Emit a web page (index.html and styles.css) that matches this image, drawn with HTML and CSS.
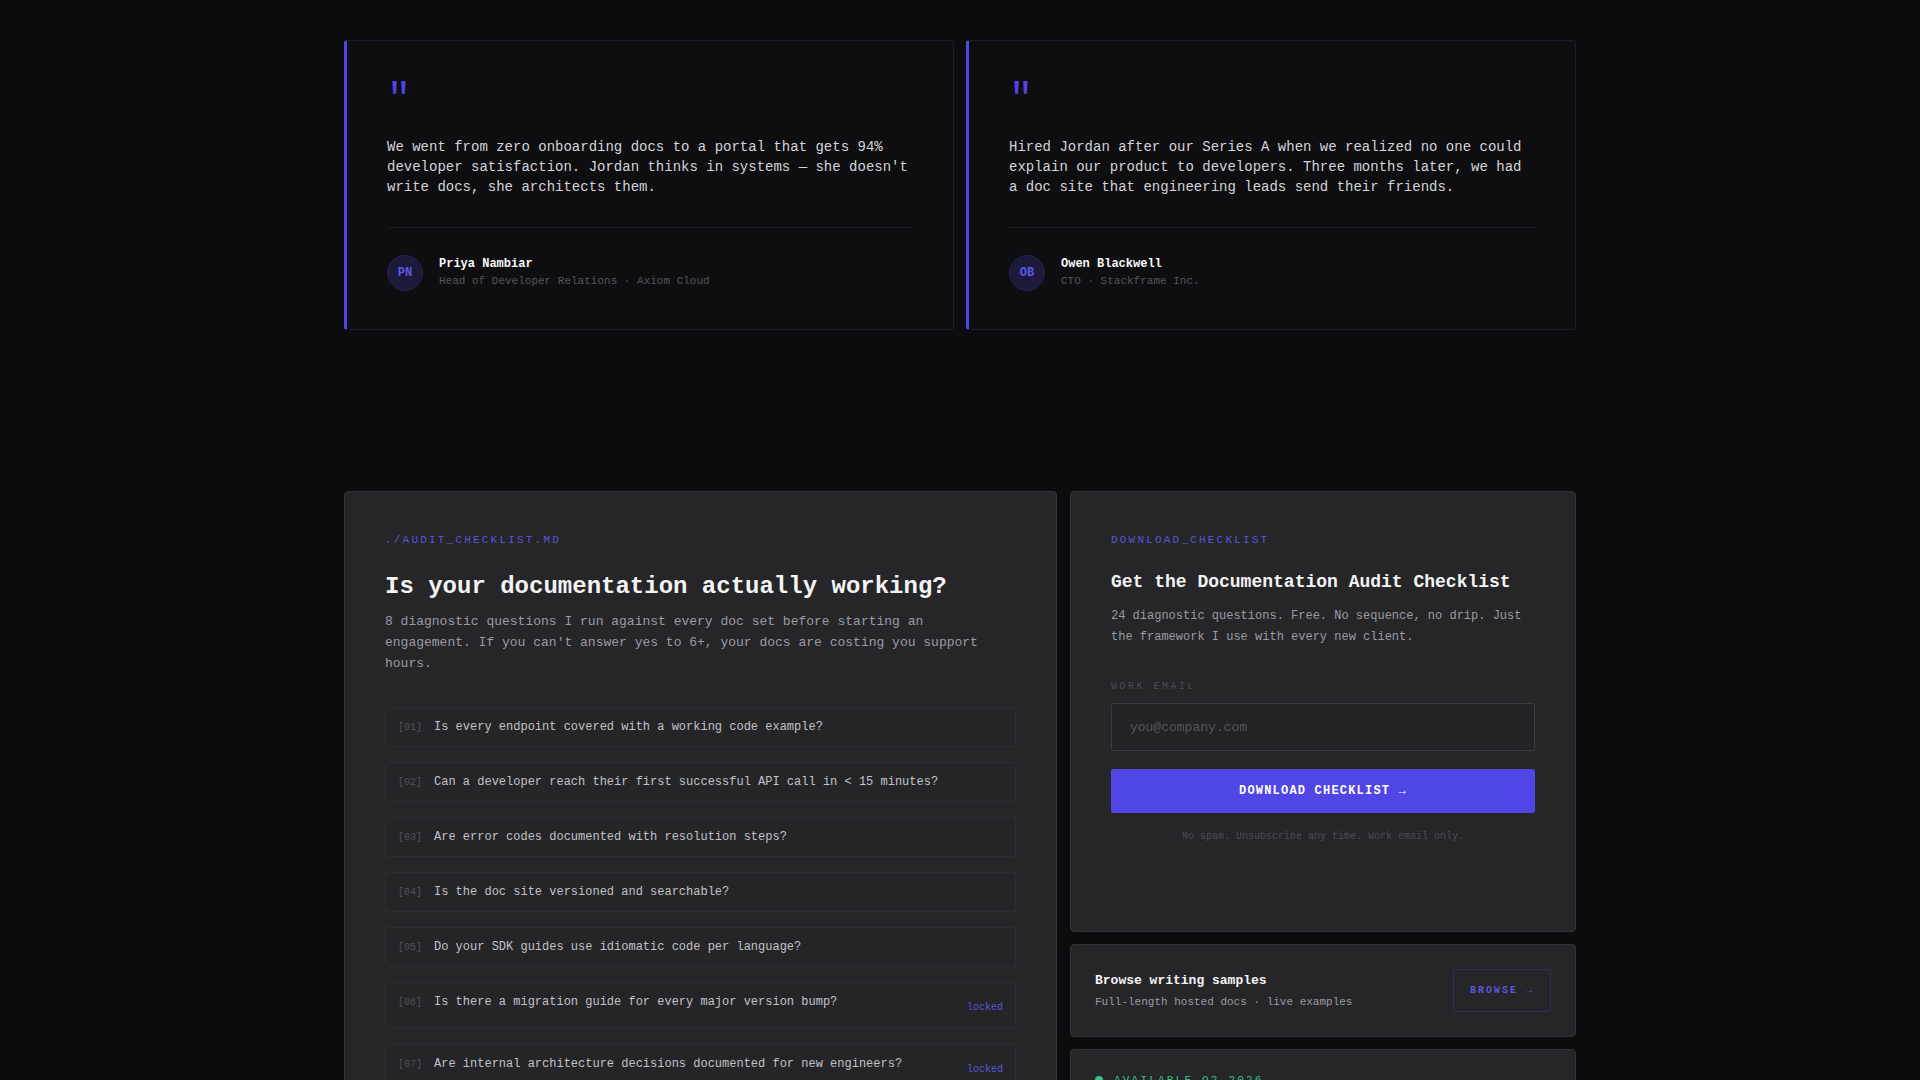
FILE: index.html
```html
<!DOCTYPE html>
<html lang="en">
<head>
<meta charset="utf-8">
<title>Testimonials &amp; Audit Checklist</title>
<link rel="stylesheet" href="styles.css">
</head>
<body>
<main class="page">
  <section class="testimonials">
    <article class="tcard">
      <div class="qmark">"</div>
      <p class="qtext">We went from zero onboarding docs to a portal that gets 94% developer satisfaction. Jordan thinks in systems — she doesn't write docs, she architects them.</p>
      <div class="tfoot">
        <div class="avatar">PN</div>
        <div class="who">
          <div class="name">Priya Nambiar</div>
          <div class="role">Head of Developer Relations · Axiom Cloud</div>
        </div>
      </div>
    </article>
    <article class="tcard">
      <div class="qmark">"</div>
      <p class="qtext">Hired Jordan after our Series A when we realized no one could explain our product to developers. Three months later, we had a doc site that engineering leads send their friends.</p>
      <div class="tfoot">
        <div class="avatar">OB</div>
        <div class="who">
          <div class="name">Owen Blackwell</div>
          <div class="role">CTO · Stackframe Inc.</div>
        </div>
      </div>
    </article>
  </section>

  <section class="audit">
    <div class="panel checklist">
      <div class="eyebrow">./AUDIT_CHECKLIST.MD</div>
      <h2 class="h-big">Is your documentation actually working?</h2>
      <p class="lead">8 diagnostic questions I run against every doc set before starting an engagement. If you can't answer yes to 6+, your docs are costing you support hours.</p>
      <ol class="items">
        <li class="item"><span class="num">[01]</span><span class="q">Is every endpoint covered with a working code example?</span></li>
        <li class="item"><span class="num">[02]</span><span class="q">Can a developer reach their first successful API call in &lt; 15 minutes?</span></li>
        <li class="item"><span class="num">[03]</span><span class="q">Are error codes documented with resolution steps?</span></li>
        <li class="item"><span class="num">[04]</span><span class="q">Is the doc site versioned and searchable?</span></li>
        <li class="item"><span class="num">[05]</span><span class="q">Do your SDK guides use idiomatic code per language?</span></li>
        <li class="item locked"><span class="num">[06]</span><span class="q">Is there a migration guide for every major version bump?</span><span class="lock">locked</span></li>
        <li class="item locked"><span class="num">[07]</span><span class="q">Are internal architecture decisions documented for new engineers?</span><span class="lock">locked</span></li>
        <li class="item locked"><span class="num">[08]</span><span class="q">Do you measure documentation with real usage analytics?</span><span class="lock">locked</span></li>
      </ol>
    </div>

    <div class="side">
      <div class="panel form-card">
        <div class="eyebrow">DOWNLOAD_CHECKLIST</div>
        <h3 class="h-mid">Get the Documentation Audit Checklist</h3>
        <p class="desc">24 diagnostic questions. Free. No sequence, no drip. Just the framework I use with every new client.</p>
        <label class="field-label" for="email">WORK EMAIL</label>
        <input class="field" id="email" type="email" placeholder="you@company.com">
        <button class="cta" type="button">DOWNLOAD CHECKLIST →</button>
        <p class="note">No spam. Unsubscribe any time. Work email only.</p>
      </div>

      <div class="panel browse-card">
        <div class="browse-text">
          <div class="browse-title">Browse writing samples</div>
          <div class="browse-sub">Full-length hosted docs · live examples</div>
        </div>
        <a class="browse-btn" href="#">BROWSE →</a>
      </div>

      <div class="panel avail-card">
        <div class="avail"><span class="dot"></span>AVAILABLE Q2 2026</div>
        <p class="avail-text">Currently booking documentation engagements for next quarter.</p>
      </div>
    </div>
  </section>
</main>
</body>
</html>
```

FILE: styles.css
```css
* { box-sizing: border-box; }

html, body {
  margin: 0;
  padding: 0;
  background: #0c0c0e;
}

body {
  font-family: "Liberation Mono", "DejaVu Sans Mono", monospace;
  color: #d4d4d8;
}

.page {
  width: 1232px;
  margin: 0 auto;
  padding-top: 40px;
}

/* Testimonials */
.testimonials {
  display: grid;
  grid-template-columns: 1fr 1fr;
  gap: 12px;
}

.tcard {
  background: #0e0e11;
  border: 1px solid #1c1b2d;
  border-left: 3px solid #4f46e5;
  border-radius: 3px;
  padding: 40px 40px 38px;
}

.qmark {
  font-size: 40px;
  line-height: 40px;
  height: 40px;
  color: #4f46e5;
  font-weight: 400;
}

.qtext {
  margin: 16px 0 30px;
  font-size: 14px;
  line-height: 20px;
  color: #d4d4d8;
}

.tfoot {
  border-top: 1px solid #1a1a1f;
  padding-top: 27px;
  display: flex;
  align-items: center;
  gap: 16px;
}

.avatar {
  width: 36px;
  height: 36px;
  border-radius: 50%;
  background: #1b1a3a;
  border: 1px solid #25234d;
  color: #5b57e6;
  font-size: 12px;
  font-weight: 700;
  display: flex;
  align-items: center;
  justify-content: center;
  flex: none;
}

.name {
  font-size: 12px;
  font-weight: 700;
  color: #fafafa;
  line-height: 17px;
}

.role {
  font-size: 11px;
  color: #55555c;
  line-height: 17px;
}

/* Audit section */
.audit {
  margin-top: 161px;
  display: grid;
  grid-template-columns: 713px 1fr;
  gap: 13px;
  align-items: start;
}

.panel {
  background: #262629;
  border: 1px solid #333337;
  border-radius: 4px;
}

.checklist {
  padding: 40px;
}

.eyebrow {
  font-size: 11px;
  line-height: 16px;
  letter-spacing: 0.2em;
  color: #5a55d8;
  margin-bottom: 23px;
}

.h-big {
  margin: 0 0 10px;
  font-size: 24px;
  line-height: 1.3;
  font-weight: 700;
  color: #f4f4f5;
}

.lead {
  margin: 0 0 32px;
  font-size: 13px;
  line-height: 1.6;
  color: #9b9ba2;
}

.items {
  list-style: none;
  margin: 0;
  padding: 0;
  display: flex;
  flex-direction: column;
  gap: 15px;
}

.item {
  display: flex;
  align-items: center;
  gap: 12px;
  padding: 10px 12px;
  border: 1px solid #2d2d31;
  background: #252528;
  border-radius: 2px;
  font-size: 12px;
  line-height: 18px;
}

.num {
  font-size: 10px;
  color: #505057;
  flex: none;
  position: relative;
  top: 1px;
}

.q {
  color: #c2c2c7;
  flex: 1;
}

.item.locked {
  align-items: flex-start;
}

.lock {
  font-size: 10px;
  line-height: 14px;
  padding: 3px 0;
  margin-top: 5px;
  color: #5a55d8;
  flex: none;
}

/* Side column */
.side {
  display: flex;
  flex-direction: column;
  gap: 12px;
}

.form-card {
  padding: 40px;
  min-height: 441px;
  display: flex;
  flex-direction: column;
}

.h-mid {
  margin: 0 0 12px;
  font-size: 18px;
  line-height: 1.3;
  font-weight: 700;
  color: #f4f4f5;
}

.desc {
  margin: 0 0 32px;
  font-size: 12px;
  line-height: 1.7;
  color: #9b9ba2;
}

.field-label {
  font-size: 10px;
  line-height: 15px;
  letter-spacing: 0.25em;
  color: #4a4a50;
  margin-bottom: 9px;
}

.field {
  height: 48px;
  width: 100%;
  background: #232326;
  border: 1px solid #3a3a3f;
  border-radius: 2px;
  padding: 0 18px;
  font-family: inherit;
  font-size: 13px;
  color: #d4d4d8;
  outline: none;
}

.field::placeholder {
  color: #55555c;
}

.cta {
  margin-top: 18px;
  height: 44px;
  width: 100%;
  border: 0;
  border-radius: 2px;
  background: #4f46e5;
  color: #ffffff;
  font-family: inherit;
  font-size: 12px;
  font-weight: 700;
  letter-spacing: 0.1em;
  cursor: pointer;
}

.note {
  margin: 16px 0 0;
  text-align: center;
  font-size: 10px;
  line-height: 15px;
  color: #4c4c52;
}

.browse-card {
  padding: 24px;
  display: flex;
  align-items: center;
  justify-content: space-between;
}

.browse-title {
  font-size: 13px;
  line-height: 18px;
  font-weight: 700;
  color: #f4f4f5;
}

.browse-sub {
  margin-top: 4px;
  font-size: 11px;
  line-height: 16px;
  color: #9b9ba2;
}

.browse-btn {
  display: block;
  padding: 13px 16px;
  border: 1px solid #302d5c;
  border-radius: 2px;
  font-size: 10px;
  line-height: 15px;
  font-weight: 700;
  letter-spacing: 0.2em;
  color: #5a55d8;
  text-decoration: none;
}

.avail-card {
  padding: 22px 24px 24px;
}

.avail {
  display: flex;
  align-items: center;
  gap: 11px;
  font-size: 11px;
  line-height: 16px;
  letter-spacing: 0.2em;
  color: #34c387;
}

.dot {
  width: 8px;
  height: 8px;
  border-radius: 50%;
  background: #34c387;
}

.avail-text {
  margin: 10px 0 0;
  font-size: 12px;
  line-height: 1.6;
  color: #9b9ba2;
}
```
